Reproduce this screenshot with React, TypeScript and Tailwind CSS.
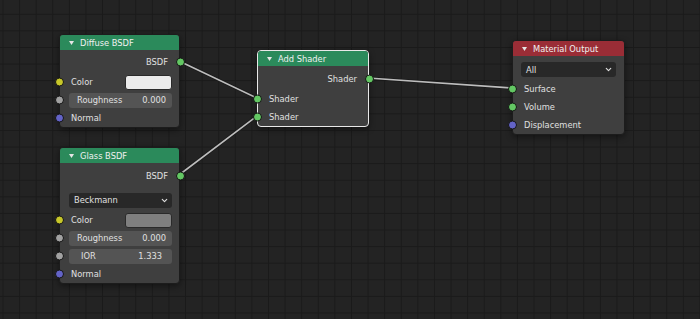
import { ChevronDown } from 'lucide-react';
import type { ReactNode } from 'react';

const SOCKET = {
  shader: 'bg-[#63c763]',
  color: 'bg-[#c7c729]',
  float: 'bg-[#a1a1a1]',
  vector: 'bg-[#6363c7]',
};

type SocketType = keyof typeof SOCKET;

function Socket({ type, side }: { type: SocketType; side: 'in' | 'out' }) {
  return (
    <span
      className={`absolute top-1/2 -translate-y-1/2 w-[9px] h-[9px] rounded-full border border-[#151515] ${SOCKET[type]} ${
        side === 'in' ? 'left-[-5.5px]' : 'right-[-5.5px]'
      }`}
    />
  );
}

function Node({
  pos,
  title,
  header,
  selected,
  children,
}: {
  pos: string;
  title: string;
  header: string;
  selected?: boolean;
  children: ReactNode;
}) {
  return (
    <div
      className={`absolute ${pos} rounded-[4px] bg-[#3f3f3f] border shadow-[0_2px_6px_rgba(0,0,0,0.45)] ${
        selected ? 'border-[#e8e8e8]' : 'border-[#1c1c1c]'
      }`}
    >
      <div className={`h-[15px] rounded-t-[3px] ${header} flex items-center pl-[9px] gap-[6px] text-[#f0f0f0]`}>
        <svg width="5" height="4" viewBox="0 0 5 4">
          <path d="M0 0 L5 0 L2.5 4 Z" fill="#e6e6e6" />
        </svg>
        <span className="pt-[1px]">{title}</span>
      </div>
      {children}
    </div>
  );
}

function Output({ label, type }: { label: string; type: SocketType }) {
  return (
    <div className="relative h-[18px] flex items-center justify-end pr-[11px]">
      <span className="pt-[1px]">{label}</span>
      <Socket type={type} side="out" />
    </div>
  );
}

function Input({ label, type, className = '' }: { label: string; type: SocketType; className?: string }) {
  return (
    <div className={`relative h-[18px] flex items-center pl-[11px] ${className}`}>
      <span className="pt-[1px]">{label}</span>
      <Socket type={type} side="in" />
    </div>
  );
}

function ColorInput({ swatch, className = '' }: { swatch: string; className?: string }) {
  return (
    <div className={`relative h-[18px] flex items-center pl-[11px] pr-[7px] ${className}`}>
      <span className="pt-[1px]">Color</span>
      <span className={`ml-auto w-[47px] h-[15px] rounded-[3px] border border-[#2a2a2a] ${swatch}`} />
      <Socket type="color" side="in" />
    </div>
  );
}

function FieldInput({ label, value, labelPad, valuePad }: { label: string; value: string; labelPad: string; valuePad: string }) {
  return (
    <div className="relative h-[18px] flex items-center pl-[9px] pr-[7px]">
      <div className={`flex-1 h-[15px] rounded-[3px] bg-[#545454] flex items-center justify-between pt-[1px] ${labelPad} ${valuePad}`}>
        <span>{label}</span>
        <span>{value}</span>
      </div>
      <Socket type="float" side="in" />
    </div>
  );
}

function Dropdown({ label, className = '' }: { label: string; className?: string }) {
  return (
    <div className={`h-[15px] rounded-[3px] bg-[#282828] flex items-center justify-between pl-[5px] pr-[3px] ${className}`}>
      <span className="pt-[1px]">{label}</span>
      <ChevronDown size={9} strokeWidth={3} color="#e0e0e0" />
    </div>
  );
}

export default function App() {
  return (
    <div className="relative w-[700px] h-[319px] overflow-hidden bg-[#232323] bg-[linear-gradient(to_right,#1a1a1a_1px,transparent_1px),linear-gradient(to_bottom,#1a1a1a_1px,transparent_1px)] bg-size-[16.6px_16.6px] bg-position-[2.5px_13.8px] text-[8.3px] leading-none text-[#e0e0e0] font-['DejaVu_Sans',sans-serif]">
      <svg className="absolute inset-0" width="700" height="319">
        <g strokeLinecap="round">
          <line x1="179" y1="61" x2="257" y2="98" stroke="#1a1a1a" strokeWidth="3.2" />
          <line x1="179" y1="175" x2="257" y2="116" stroke="#1a1a1a" strokeWidth="3.2" />
          <line x1="368" y1="78" x2="512" y2="88" stroke="#1a1a1a" strokeWidth="3.2" />
          <line x1="179" y1="61" x2="257" y2="98" stroke="#bdbdbd" strokeWidth="1.6" />
          <line x1="179" y1="175" x2="257" y2="116" stroke="#bdbdbd" strokeWidth="1.6" />
          <line x1="368" y1="78" x2="512" y2="88" stroke="#bdbdbd" strokeWidth="1.6" />
        </g>
      </svg>

      <Node pos="left-[59px] top-[34px] w-[121px]" title="Diffuse BSDF" header="bg-[#2b8a5b]">
        <div className="pt-[3px]">
          <Output label="BSDF" type="shader" />
          <ColorInput swatch="bg-[#ebebeb]" className="mt-[2px]" />
          <FieldInput label="Roughness" value="0.000" labelPad="pl-[8px]" valuePad="pr-[6px]" />
          <Input label="Normal" type="vector" />
        </div>
      </Node>

      <Node pos="left-[59px] top-[147px] w-[121px]" title="Glass BSDF" header="bg-[#2b8a5b]">
        <div className="pt-[4px]">
          <Output label="BSDF" type="shader" />
          <div className="h-[18px] flex items-center pl-[9px] pr-[7px] mt-[6px]">
            <Dropdown label="Beckmann" className="flex-1" />
          </div>
          <ColorInput swatch="bg-[#7f7f7f]" className="mt-[2px]" />
          <FieldInput label="Roughness" value="0.000" labelPad="pl-[8px]" valuePad="pr-[6px]" />
          <FieldInput label="IOR" value="1.333" labelPad="pl-[12px]" valuePad="pr-[10px]" />
          <Input label="Normal" type="vector" />
        </div>
      </Node>

      <Node pos="left-[257px] top-[50px] w-[112px]" title="Add Shader" header="bg-[#2b8a5b]" selected>
        <div className="pt-[4px]">
          <Output label="Shader" type="shader" />
          <Input label="Shader" type="shader" className="mt-[2px] pl-[9px]" />
          <Input label="Shader" type="shader" className="pl-[9px]" />
        </div>
      </Node>

      <Node pos="left-[512px] top-[40px] w-[113px]" title="Material Output" header="bg-[#9a2d36]">
        <div className="pt-[6px]">
          <Dropdown label="All" className="mx-[8px]" />
          <Input label="Surface" type="shader" className="mt-[3px] pl-[10px]" />
          <Input label="Volume" type="shader" className="pl-[10px]" />
          <Input label="Displacement" type="vector" className="pl-[10px]" />
        </div>
      </Node>
    </div>
  );
}
